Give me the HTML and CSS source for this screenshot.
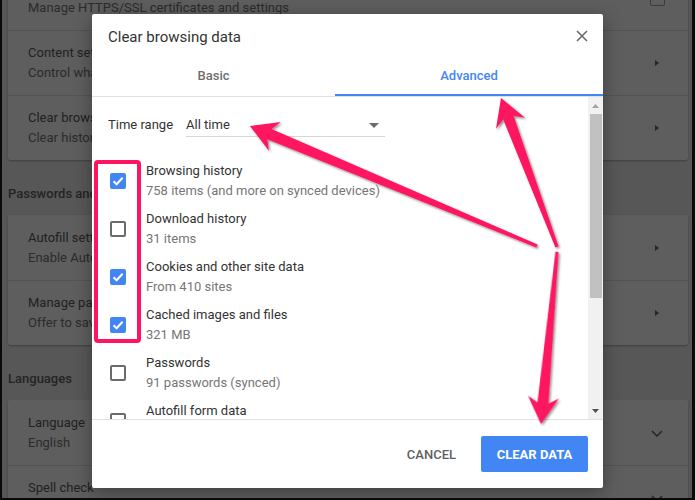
FILE: index.html
```html
<!DOCTYPE html>
<html lang="en">
<head>
<meta charset="utf-8">
<title>Clear browsing data</title>
<link rel="stylesheet" href="styles.css">
</head>
<body>
<div class="screen">
  <div class="settings">
    <div class="card card-first">
      <div class="row">
        <div class="row-text">
          <div class="row-title">Manage certificates</div>
          <div class="row-sub">Manage HTTPS/SSL certificates and settings</div>
        </div>
        <span class="row-icon"><span class="ext-box"></span></span>
      </div>
      <div class="row">
        <div class="row-text">
          <div class="row-title">Content settings</div>
          <div class="row-sub">Control what information websites can use and what content they can show you</div>
        </div>
        <span class="row-icon"><span class="tri-right"></span></span>
      </div>
      <div class="row">
        <div class="row-text">
          <div class="row-title">Clear browsing data</div>
          <div class="row-sub">Clear history, cookies, cache, and more</div>
        </div>
        <span class="row-icon"><span class="tri-right"></span></span>
      </div>
    </div>

    <h2 class="section">Passwords and forms</h2>
    <div class="card">
      <div class="row">
        <div class="row-text">
          <div class="row-title">Autofill settings</div>
          <div class="row-sub">Enable Autofill to fill out forms in a single click</div>
        </div>
        <span class="row-icon"><span class="tri-right"></span></span>
      </div>
      <div class="row">
        <div class="row-text">
          <div class="row-title">Manage passwords</div>
          <div class="row-sub">Offer to save your web passwords</div>
        </div>
        <span class="row-icon"><span class="tri-right"></span></span>
      </div>
    </div>

    <h2 class="section">Languages</h2>
    <div class="card">
      <div class="row">
        <div class="row-text">
          <div class="row-title">Language</div>
          <div class="row-sub">English</div>
        </div>
        <span class="row-icon"><svg class="chev-down" width="12" height="7" viewBox="0 0 12 7"><polyline points="1,1 6,6 11,1"/></svg></span>
      </div>
      <div class="row">
        <div class="row-text">
          <div class="row-title">Spell check</div>
          <div class="row-sub">English (United States)</div>
        </div>
        <span class="row-icon"><svg class="chev-down" width="12" height="7" viewBox="0 0 12 7"><polyline points="1,1 6,6 11,1"/></svg></span>
      </div>
    </div>
  </div>

  <div class="dialog">
    <div class="dialog-header">
      <div class="dialog-title">Clear browsing data</div>
      <svg class="close" width="12" height="12" viewBox="0 0 12 12"><path d="M1 1 L11 11 M11 1 L1 11"/></svg>
    </div>
    <div class="tabs">
      <div class="tab tab-basic">Basic</div>
      <div class="tab tab-active">Advanced</div>
    </div>
    <div class="dialog-body">
      <div class="scroll">
        <div class="time-range">
          <span class="tr-label">Time range</span>
          <div class="select">
            <span>All time</span>
            <svg class="caret" width="10" height="5" viewBox="0 0 10 5"><polygon points="0,0 10,0 5,5"/></svg>
          </div>
        </div>
        <ul class="options">
          <li class="option">
            <span class="cb cb-on"><svg width="16" height="16" viewBox="0 0 16 16"><polyline points="3.5,8.3 6.6,11.3 12.6,4.8"/></svg></span>
            <div class="opt-text"><div class="opt-title">Browsing history</div><div class="opt-sub">758 items (and more on synced devices)</div></div>
          </li>
          <li class="option">
            <span class="cb"></span>
            <div class="opt-text"><div class="opt-title">Download history</div><div class="opt-sub">31 items</div></div>
          </li>
          <li class="option">
            <span class="cb cb-on"><svg width="16" height="16" viewBox="0 0 16 16"><polyline points="3.5,8.3 6.6,11.3 12.6,4.8"/></svg></span>
            <div class="opt-text"><div class="opt-title">Cookies and other site data</div><div class="opt-sub">From 410 sites</div></div>
          </li>
          <li class="option">
            <span class="cb cb-on"><svg width="16" height="16" viewBox="0 0 16 16"><polyline points="3.5,8.3 6.6,11.3 12.6,4.8"/></svg></span>
            <div class="opt-text"><div class="opt-title">Cached images and files</div><div class="opt-sub">321 MB</div></div>
          </li>
          <li class="option">
            <span class="cb"></span>
            <div class="opt-text"><div class="opt-title">Passwords</div><div class="opt-sub">91 passwords (synced)</div></div>
          </li>
          <li class="option">
            <span class="cb"></span>
            <div class="opt-text"><div class="opt-title">Autofill form data</div><div class="opt-sub">2 suggestions (synced)</div></div>
          </li>
        </ul>
      </div>
      <div class="scrollbar">
        <div class="sb-btn"><svg width="7" height="4" viewBox="0 0 7 4"><polygon class="sb-up" points="0,4 7,4 3.5,0"/></svg></div>
        <div class="sb-thumb"></div>
        <div class="sb-track"></div>
        <div class="sb-btn"><svg width="7" height="4" viewBox="0 0 7 4"><polygon class="sb-down" points="0,0 7,0 3.5,4"/></svg></div>
      </div>
    </div>
    <div class="dialog-footer">
      <button class="btn btn-text">CANCEL</button>
      <button class="btn btn-primary">CLEAR DATA</button>
    </div>
  </div>

  <svg class="annotations" width="695" height="500" viewBox="0 0 695 500">
    <defs>
      <filter id="shadow" x="-20%" y="-20%" width="140%" height="140%">
        <feDropShadow dx="1.5" dy="1.5" stdDeviation="1.2" flood-color="#000" flood-opacity="0.45"/>
      </filter>
    </defs>
    <rect x="96" y="162" width="43" height="179" rx="2" class="hl-rect"/>
    <g class="arrow" filter="url(#shadow)">
      <polygon transform="translate(250 126) rotate(22.69)" points="0,0 27,15.5 21,5.5 311,1.6 311,-1.6 21,-5.5 27,-15.5"/>
      <polygon transform="translate(501 98) rotate(69.4)" points="0,0 27,15.5 21,5.5 159,1.6 159,-1.6 21,-5.5 27,-15.5"/>
      <polygon transform="translate(541 424) rotate(-84.7)" points="0,0 27,15.5 21,5.5 173,1.6 173,-1.6 21,-5.5 27,-15.5"/>
    </g>
  </svg>
</div>
</body>
</html>
```

FILE: styles.css
```css
* { box-sizing: border-box; }

body {
  margin: 0;
  background: #0a0a0a;
}

.screen {
  position: relative;
  width: 695px;
  height: 500px;
  border-left: 2px solid #0a0a0a;
  border-right: 3px solid #0a0a0a;
  border-bottom: 2px solid #0a0a0a;
  background: #575757;
  overflow: hidden;
  font-family: Roboto, "Noto Sans", sans-serif;
}

/* dimmed settings page */
.settings {
  padding: 0 4px 0 6px;
}

.card {
  background: #5e5e5e;
  border-radius: 2px;
  box-shadow: 0 1px 2px rgba(0, 0, 0, 0.28);
}

.card-first {
  margin-top: -35px;
}

.row {
  height: 65px;
  padding: 13px 0 12px 20px;
  display: flex;
  align-items: center;
  justify-content: space-between;
}

.row + .row {
  border-top: 1px solid #535353;
  padding-top: 12px;
}

.row-text {
  white-space: nowrap;
  overflow: hidden;
}

.row-title {
  font-size: 13px;
  line-height: 20px;
  color: #212121;
}

.row-sub {
  font-size: 13px;
  line-height: 20px;
  color: #2b2b2b;
}

.row-icon {
  width: 20px;
  margin-right: 21px;
  display: flex;
  justify-content: center;
  align-items: center;
  flex: none;
}

.tri-right {
  width: 0;
  height: 0;
  border-top: 3.5px solid transparent;
  border-bottom: 3.5px solid transparent;
  border-left: 4px solid #262626;
}

.ext-box {
  width: 15px;
  height: 15px;
  border: 1.5px solid #3a3a3a;
  border-radius: 2px;
}

.chev-down polyline {
  fill: none;
  stroke: #262626;
  stroke-width: 1.5;
}

.section {
  margin: 24px 0 11px 0;
  font-size: 13px;
  line-height: 20px;
  font-weight: 500;
  color: #242424;
}

/* dialog */
.dialog {
  position: absolute;
  left: 90px;
  top: 14px;
  width: 511px;
  height: 474px;
  background: #fff;
  border-radius: 2px;
  box-shadow: 0 4px 18px rgba(0, 0, 0, 0.35);
  display: flex;
  flex-direction: column;
  overflow: hidden;
}

.dialog-header {
  padding: 13px 15px 5px 16px;
  display: flex;
  justify-content: space-between;
  align-items: center;
}

.dialog-title {
  font-size: 15px;
  line-height: 20px;
  color: #333;
}

.close {
  margin-top: -2px;
}

.close path {
  stroke: #6b6b6b;
  stroke-width: 1.6;
  fill: none;
}

.tabs {
  display: flex;
  border-bottom: 1px solid #e0e0e0;
}

.tab {
  padding: 14px 0 8px;
  border-bottom: 2px solid transparent;
  text-align: center;
  font-size: 13px;
  font-weight: 500;
  line-height: 20px;
  color: #6f6f6f;
}

.tab-basic {
  width: 243px;
}

.tab-active {
  flex: 1;
  color: #4285f4;
  border-bottom-color: #4285f4;
}

.dialog-body {
  height: 323px;
  display: flex;
  border-bottom: 1px solid #e0e0e0;
}

.scroll {
  flex: 1;
  overflow: hidden;
}

.time-range {
  display: flex;
  align-items: flex-start;
  padding: 18px 0 0 16px;
  font-size: 13px;
  line-height: 20px;
  color: #333;
}

.tr-label {
  margin-right: 13px;
}

.select {
  width: 199px;
  display: flex;
  justify-content: space-between;
  align-items: center;
  padding-bottom: 1px;
  border-bottom: 1px solid #d6d6d6;
}

.caret {
  margin-right: 6px;
}

.caret polygon {
  fill: #6b6b6b;
}

.options {
  list-style: none;
  margin: 20px 0 0 0;
  padding: 0 0 0 18px;
}

.option {
  height: 48px;
  display: flex;
  align-items: center;
}

.cb {
  width: 16px;
  height: 16px;
  flex: none;
  margin-right: 20px;
  border: 2px solid #6b6b6b;
  border-radius: 2px;
}

.cb-on {
  border: none;
  background: #4285f4;
}

.cb-on svg {
  display: block;
}

.cb-on polyline {
  fill: none;
  stroke: #fff;
  stroke-width: 2;
}

.opt-text {
  white-space: nowrap;
}

.opt-title {
  font-size: 13px;
  line-height: 20px;
  color: #333;
}

.opt-sub {
  font-size: 13px;
  line-height: 20px;
  color: #767676;
}

.scrollbar {
  width: 15px;
  flex: none;
  background: #f1f1f1;
  display: flex;
  flex-direction: column;
}

.sb-btn {
  height: 17px;
  display: flex;
  align-items: center;
  justify-content: center;
}

.sb-btn svg {
  display: block;
}

.sb-up {
  fill: #a3a3a3;
}

.sb-down {
  fill: #505050;
}

.sb-thumb {
  height: 184px;
  margin: 0 1px 0 2px;
  background: #c1c1c1;
}

.sb-track {
  flex: 1;
}

.dialog-footer {
  flex: 1;
  display: flex;
  justify-content: flex-end;
  align-items: flex-start;
  padding: 16px 15px 0 0;
}

.btn {
  height: 36px;
  border: none;
  border-radius: 2px;
  font-family: Roboto, "Noto Sans", sans-serif;
  font-size: 13px;
  font-weight: 500;
  background: transparent;
  padding: 0 16px;
}

.btn-text {
  color: #5f5f5f;
  margin-right: 9px;
}

.btn-primary {
  width: 107px;
  background: #4285f4;
  color: #fff;
  font-weight: 700;
  padding: 0;
}

/* annotation overlay */
.annotations {
  position: absolute;
  left: -2px;
  top: 0;
  pointer-events: none;
}

.hl-rect {
  fill: none;
  stroke: #fe1460;
  stroke-width: 4;
}

.arrow polygon {
  fill: #fe1460;
}
```
